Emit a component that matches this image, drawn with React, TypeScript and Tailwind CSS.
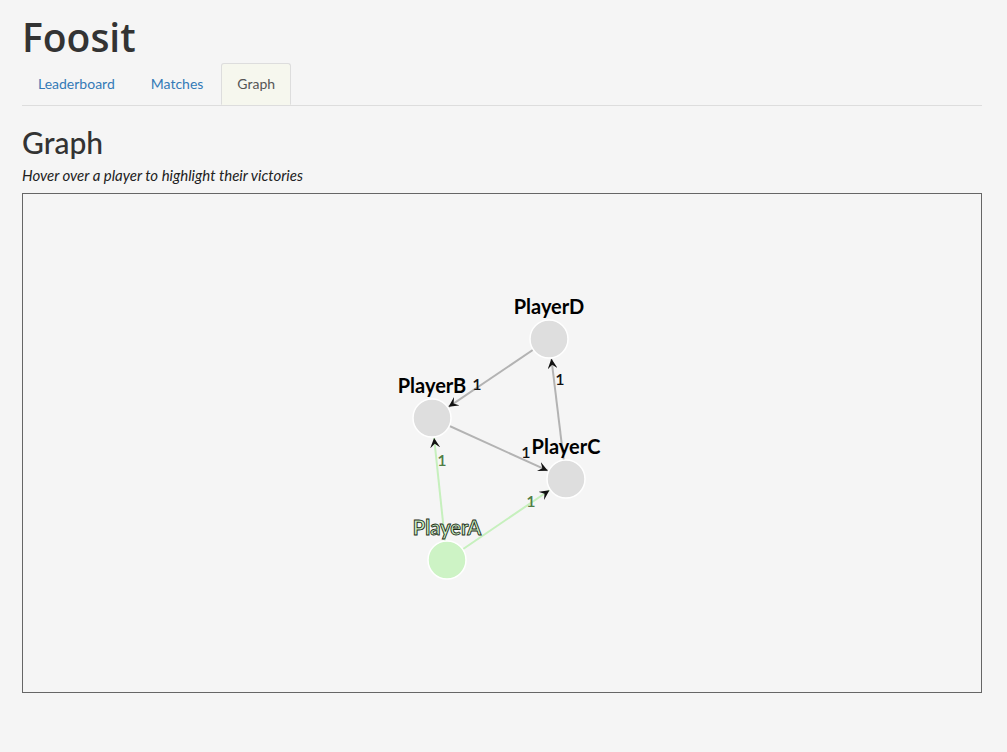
import React from "react";

type Node = { id: string; x: number; y: number; win?: boolean };
type Edge = { from: string; to: string; label: string; lx: number; ly: number; win?: boolean };

const nodes: Node[] = [
  { id: "PlayerD", x: 526, y: 145 },
  { id: "PlayerB", x: 409, y: 224 },
  { id: "PlayerC", x: 543, y: 285 },
  { id: "PlayerA", x: 424, y: 366, win: true },
];

const edges: Edge[] = [
  { from: "PlayerD", to: "PlayerB", label: "1", lx: 454, ly: 192 },
  { from: "PlayerC", to: "PlayerD", label: "1", lx: 537, ly: 187 },
  { from: "PlayerB", to: "PlayerC", label: "1", lx: 503, ly: 260 },
  { from: "PlayerA", to: "PlayerB", label: "1", lx: 419, ly: 268, win: true },
  { from: "PlayerA", to: "PlayerC", label: "1", lx: 508, ly: 309, win: true },
];

const R = 19;

function Graph() {
  const byId = Object.fromEntries(nodes.map((n) => [n.id, n]));
  return (
    <svg width="958" height="497" className="block">
      <defs>
        <marker id="arrow" viewBox="0 -5 10 10" refX="10" refY="0" markerWidth="5" markerHeight="5" orient="auto">
          <path d="M0,-5L10,0L0,5L4,0Z" fill="#111" />
        </marker>
      </defs>
      {edges.map((e) => {
        const a = byId[e.from];
        const b = byId[e.to];
        const dx = b.x - a.x;
        const dy = b.y - a.y;
        const len = Math.hypot(dx, dy);
        const ux = dx / len;
        const uy = dy / len;
        return (
          <g key={e.from + e.to}>
            <line
              x1={a.x}
              y1={a.y}
              x2={b.x - ux * (R + 1)}
              y2={b.y - uy * (R + 1)}
              stroke={e.win ? "#c6f0bd" : "#b3b3b3"}
              strokeWidth="2"
              markerEnd="url(#arrow)"
            />
            <text
              x={e.lx}
              y={e.ly}
              textAnchor="middle"
              fontFamily="Lato, sans-serif"
              fontWeight="600"
              fontSize="16"
              fill={e.win ? "#4f7d45" : "#111"}
              dominantBaseline="middle"
            >
              {e.label}
            </text>
          </g>
        );
      })}
      {nodes.map((n) => (
        <g key={n.id}>
          <circle cx={n.x} cy={n.y} r={R} fill={n.win ? "#cdf3c5" : "#dedede"} stroke="#fff" strokeWidth="1.5" />
          <text
            x={n.x}
            y={n.y - 25}
            textAnchor="middle"
            fontFamily="Lato, sans-serif"
            fontWeight="bold"
            fontSize="20"
            fill={n.win ? "#cdf3c5" : "#000"}
            stroke={n.win ? "#1e2e1a" : "none"}
            strokeWidth={n.win ? 0.9 : 0}
          >
            {n.id}
          </text>
        </g>
      ))}
    </svg>
  );
}

export default function App() {
  return (
    <div className="min-h-[752px] bg-[#f5f5f5] px-[22px] pt-[12px] text-[#333]" style={{ fontFamily: "Lato, sans-serif" }}>
      <h1 className="mt-[3px] text-[39px] font-semibold leading-[44px] text-[#333]" style={{ fontFamily: "'Open Sans', sans-serif" }}>
        Foosit
      </h1>
      <ul className="mt-[4px] flex border-b border-[#ddd] text-[14px] w-[960px]">
        <li className="mr-[2px]">
          <a className="block pl-[15px] pr-[16px] py-[10px] leading-[20px] text-[#337ab7] border border-transparent">Leaderboard</a>
        </li>
        <li className="mr-[1px]">
          <a className="block px-[16px] py-[10px] leading-[20px] text-[#337ab7] border border-transparent">Matches</a>
        </li>
        <li className="-mb-px">
          <a className="block px-[15px] py-[10px] leading-[20px] text-[#555] bg-[#f6f7ee] border border-[#ddd] border-b-transparent rounded-t-[3px]">Graph</a>
        </li>
      </ul>
      <h2 className="mt-[20px] text-[30px] leading-[33px] font-medium text-[#333]">Graph</h2>
      <p className="mt-[7px] text-[15px] italic text-[#222] leading-[18px]">Hover over a player to highlight their victories</p>
      <div className="mt-[9px] w-[960px] h-[500px] border border-[#666]">
        <Graph />
      </div>
    </div>
  );
}
